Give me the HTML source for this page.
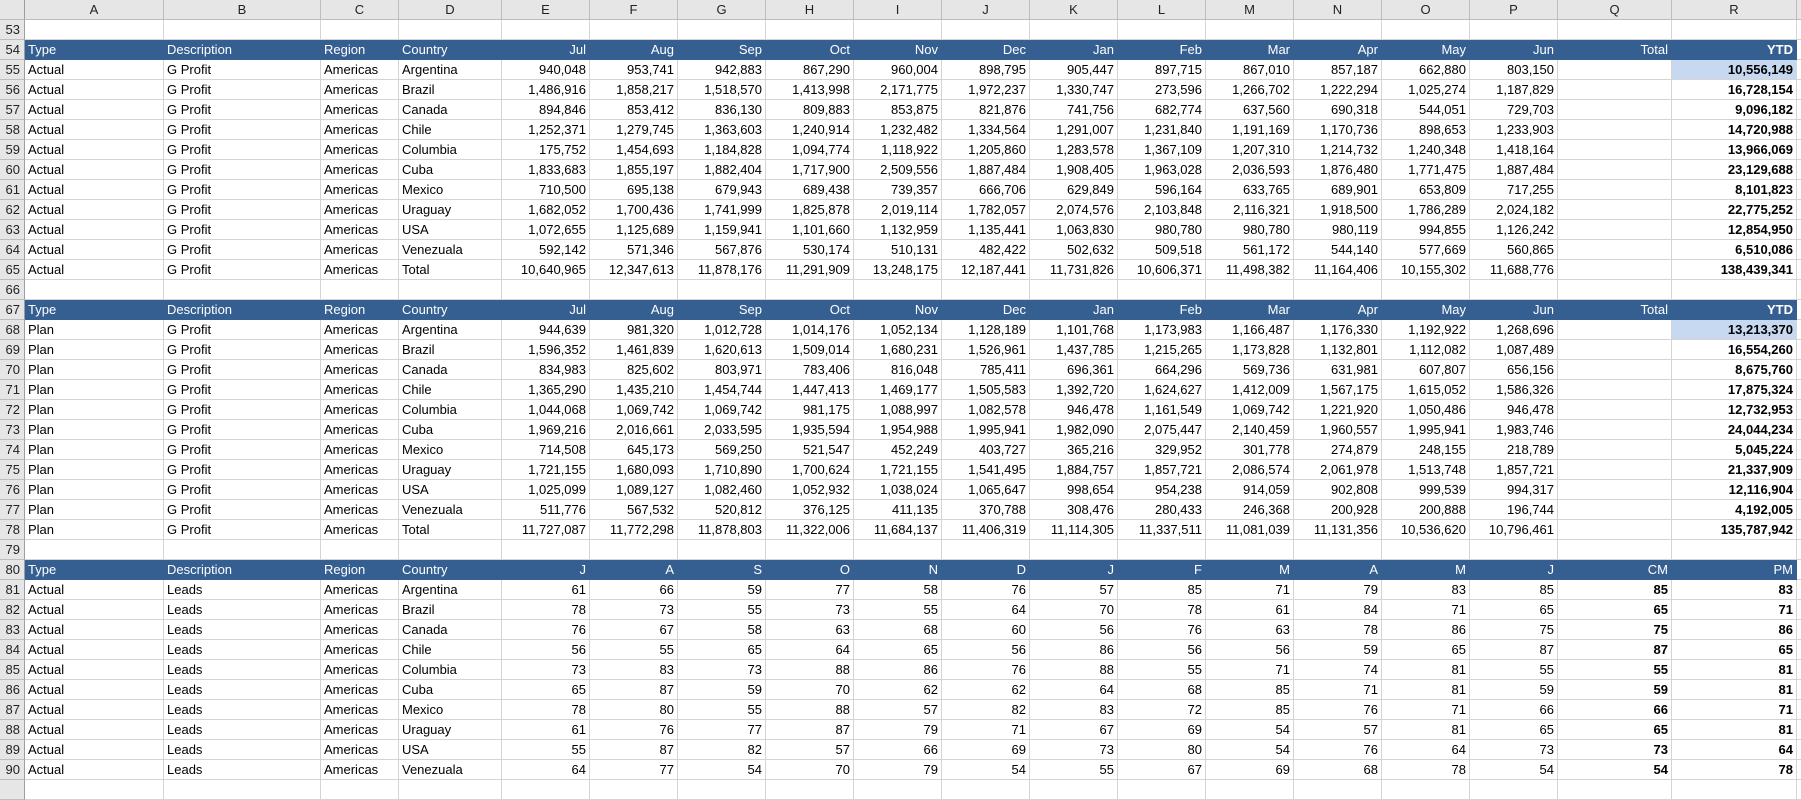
<!DOCTYPE html>
<html><head><meta charset="utf-8"><style>
body{margin:0;background:#fff;width:1801px;height:785px;overflow:hidden;font-family:"Liberation Sans",Arial,sans-serif;font-size:13px;color:#000}
.g{display:grid;grid-template-columns:25px 139px 157px 78px 103px repeat(12,88px) 114px 125px 4px;grid-auto-rows:20px}
.g>div{box-sizing:border-box;border-right:1px solid #d4d4d4;border-bottom:1px solid #d4d4d4;line-height:19px;padding:0 3px;white-space:nowrap;overflow:hidden}
.g>.h{background:#e6e6e6;text-align:center;border-color:#bdbdbd;color:#222;font-size:13px;line-height:20px}
.g>.n{background:#e6e6e6;text-align:right;border-right-color:#9e9e9e;border-bottom-color:#bdbdbd;color:#222;padding:0 4px 0 0}
.g>.c{background:#e6e6e6;border-color:#bdbdbd;border-right-color:#9e9e9e}
.r{text-align:right}
.b{font-weight:bold}
.g>.u{background:#365f91;color:#fff;border-color:#365f91}
.g>.s{background:#c6d9f1}
.g>.e{border-right:none}
</style></head><body><div class="g">
<div class="c"></div><div class="h">A</div><div class="h">B</div><div class="h">C</div><div class="h">D</div><div class="h">E</div><div class="h">F</div><div class="h">G</div><div class="h">H</div><div class="h">I</div><div class="h">J</div><div class="h">K</div><div class="h">L</div><div class="h">M</div><div class="h">N</div><div class="h">O</div><div class="h">P</div><div class="h">Q</div><div class="h">R</div><div class="h e"></div>
<div class="n">53</div><div></div><div></div><div></div><div></div><div></div><div></div><div></div><div></div><div></div><div></div><div></div><div></div><div></div><div></div><div></div><div></div><div></div><div></div><div class="e"></div>
<div class="n">54</div><div class="u">Type</div><div class="u">Description</div><div class="u">Region</div><div class="u">Country</div><div class="u r">Jul</div><div class="u r">Aug</div><div class="u r">Sep</div><div class="u r">Oct</div><div class="u r">Nov</div><div class="u r">Dec</div><div class="u r">Jan</div><div class="u r">Feb</div><div class="u r">Mar</div><div class="u r">Apr</div><div class="u r">May</div><div class="u r">Jun</div><div class="u r">Total</div><div class="u r b">YTD</div><div class="e"></div>
<div class="n">55</div><div>Actual</div><div>G Profit</div><div>Americas</div><div>Argentina</div><div class="r">940,048</div><div class="r">953,741</div><div class="r">942,883</div><div class="r">867,290</div><div class="r">960,004</div><div class="r">898,795</div><div class="r">905,447</div><div class="r">897,715</div><div class="r">867,010</div><div class="r">857,187</div><div class="r">662,880</div><div class="r">803,150</div><div></div><div class="r b s">10,556,149</div><div class="e"></div>
<div class="n">56</div><div>Actual</div><div>G Profit</div><div>Americas</div><div>Brazil</div><div class="r">1,486,916</div><div class="r">1,858,217</div><div class="r">1,518,570</div><div class="r">1,413,998</div><div class="r">2,171,775</div><div class="r">1,972,237</div><div class="r">1,330,747</div><div class="r">273,596</div><div class="r">1,266,702</div><div class="r">1,222,294</div><div class="r">1,025,274</div><div class="r">1,187,829</div><div></div><div class="r b">16,728,154</div><div class="e"></div>
<div class="n">57</div><div>Actual</div><div>G Profit</div><div>Americas</div><div>Canada</div><div class="r">894,846</div><div class="r">853,412</div><div class="r">836,130</div><div class="r">809,883</div><div class="r">853,875</div><div class="r">821,876</div><div class="r">741,756</div><div class="r">682,774</div><div class="r">637,560</div><div class="r">690,318</div><div class="r">544,051</div><div class="r">729,703</div><div></div><div class="r b">9,096,182</div><div class="e"></div>
<div class="n">58</div><div>Actual</div><div>G Profit</div><div>Americas</div><div>Chile</div><div class="r">1,252,371</div><div class="r">1,279,745</div><div class="r">1,363,603</div><div class="r">1,240,914</div><div class="r">1,232,482</div><div class="r">1,334,564</div><div class="r">1,291,007</div><div class="r">1,231,840</div><div class="r">1,191,169</div><div class="r">1,170,736</div><div class="r">898,653</div><div class="r">1,233,903</div><div></div><div class="r b">14,720,988</div><div class="e"></div>
<div class="n">59</div><div>Actual</div><div>G Profit</div><div>Americas</div><div>Columbia</div><div class="r">175,752</div><div class="r">1,454,693</div><div class="r">1,184,828</div><div class="r">1,094,774</div><div class="r">1,118,922</div><div class="r">1,205,860</div><div class="r">1,283,578</div><div class="r">1,367,109</div><div class="r">1,207,310</div><div class="r">1,214,732</div><div class="r">1,240,348</div><div class="r">1,418,164</div><div></div><div class="r b">13,966,069</div><div class="e"></div>
<div class="n">60</div><div>Actual</div><div>G Profit</div><div>Americas</div><div>Cuba</div><div class="r">1,833,683</div><div class="r">1,855,197</div><div class="r">1,882,404</div><div class="r">1,717,900</div><div class="r">2,509,556</div><div class="r">1,887,484</div><div class="r">1,908,405</div><div class="r">1,963,028</div><div class="r">2,036,593</div><div class="r">1,876,480</div><div class="r">1,771,475</div><div class="r">1,887,484</div><div></div><div class="r b">23,129,688</div><div class="e"></div>
<div class="n">61</div><div>Actual</div><div>G Profit</div><div>Americas</div><div>Mexico</div><div class="r">710,500</div><div class="r">695,138</div><div class="r">679,943</div><div class="r">689,438</div><div class="r">739,357</div><div class="r">666,706</div><div class="r">629,849</div><div class="r">596,164</div><div class="r">633,765</div><div class="r">689,901</div><div class="r">653,809</div><div class="r">717,255</div><div></div><div class="r b">8,101,823</div><div class="e"></div>
<div class="n">62</div><div>Actual</div><div>G Profit</div><div>Americas</div><div>Uraguay</div><div class="r">1,682,052</div><div class="r">1,700,436</div><div class="r">1,741,999</div><div class="r">1,825,878</div><div class="r">2,019,114</div><div class="r">1,782,057</div><div class="r">2,074,576</div><div class="r">2,103,848</div><div class="r">2,116,321</div><div class="r">1,918,500</div><div class="r">1,786,289</div><div class="r">2,024,182</div><div></div><div class="r b">22,775,252</div><div class="e"></div>
<div class="n">63</div><div>Actual</div><div>G Profit</div><div>Americas</div><div>USA</div><div class="r">1,072,655</div><div class="r">1,125,689</div><div class="r">1,159,941</div><div class="r">1,101,660</div><div class="r">1,132,959</div><div class="r">1,135,441</div><div class="r">1,063,830</div><div class="r">980,780</div><div class="r">980,780</div><div class="r">980,119</div><div class="r">994,855</div><div class="r">1,126,242</div><div></div><div class="r b">12,854,950</div><div class="e"></div>
<div class="n">64</div><div>Actual</div><div>G Profit</div><div>Americas</div><div>Venezuala</div><div class="r">592,142</div><div class="r">571,346</div><div class="r">567,876</div><div class="r">530,174</div><div class="r">510,131</div><div class="r">482,422</div><div class="r">502,632</div><div class="r">509,518</div><div class="r">561,172</div><div class="r">544,140</div><div class="r">577,669</div><div class="r">560,865</div><div></div><div class="r b">6,510,086</div><div class="e"></div>
<div class="n">65</div><div>Actual</div><div>G Profit</div><div>Americas</div><div>Total</div><div class="r">10,640,965</div><div class="r">12,347,613</div><div class="r">11,878,176</div><div class="r">11,291,909</div><div class="r">13,248,175</div><div class="r">12,187,441</div><div class="r">11,731,826</div><div class="r">10,606,371</div><div class="r">11,498,382</div><div class="r">11,164,406</div><div class="r">10,155,302</div><div class="r">11,688,776</div><div></div><div class="r b">138,439,341</div><div class="e"></div>
<div class="n">66</div><div></div><div></div><div></div><div></div><div></div><div></div><div></div><div></div><div></div><div></div><div></div><div></div><div></div><div></div><div></div><div></div><div></div><div></div><div class="e"></div>
<div class="n">67</div><div class="u">Type</div><div class="u">Description</div><div class="u">Region</div><div class="u">Country</div><div class="u r">Jul</div><div class="u r">Aug</div><div class="u r">Sep</div><div class="u r">Oct</div><div class="u r">Nov</div><div class="u r">Dec</div><div class="u r">Jan</div><div class="u r">Feb</div><div class="u r">Mar</div><div class="u r">Apr</div><div class="u r">May</div><div class="u r">Jun</div><div class="u r">Total</div><div class="u r b">YTD</div><div class="e"></div>
<div class="n">68</div><div>Plan</div><div>G Profit</div><div>Americas</div><div>Argentina</div><div class="r">944,639</div><div class="r">981,320</div><div class="r">1,012,728</div><div class="r">1,014,176</div><div class="r">1,052,134</div><div class="r">1,128,189</div><div class="r">1,101,768</div><div class="r">1,173,983</div><div class="r">1,166,487</div><div class="r">1,176,330</div><div class="r">1,192,922</div><div class="r">1,268,696</div><div></div><div class="r b s">13,213,370</div><div class="e"></div>
<div class="n">69</div><div>Plan</div><div>G Profit</div><div>Americas</div><div>Brazil</div><div class="r">1,596,352</div><div class="r">1,461,839</div><div class="r">1,620,613</div><div class="r">1,509,014</div><div class="r">1,680,231</div><div class="r">1,526,961</div><div class="r">1,437,785</div><div class="r">1,215,265</div><div class="r">1,173,828</div><div class="r">1,132,801</div><div class="r">1,112,082</div><div class="r">1,087,489</div><div></div><div class="r b">16,554,260</div><div class="e"></div>
<div class="n">70</div><div>Plan</div><div>G Profit</div><div>Americas</div><div>Canada</div><div class="r">834,983</div><div class="r">825,602</div><div class="r">803,971</div><div class="r">783,406</div><div class="r">816,048</div><div class="r">785,411</div><div class="r">696,361</div><div class="r">664,296</div><div class="r">569,736</div><div class="r">631,981</div><div class="r">607,807</div><div class="r">656,156</div><div></div><div class="r b">8,675,760</div><div class="e"></div>
<div class="n">71</div><div>Plan</div><div>G Profit</div><div>Americas</div><div>Chile</div><div class="r">1,365,290</div><div class="r">1,435,210</div><div class="r">1,454,744</div><div class="r">1,447,413</div><div class="r">1,469,177</div><div class="r">1,505,583</div><div class="r">1,392,720</div><div class="r">1,624,627</div><div class="r">1,412,009</div><div class="r">1,567,175</div><div class="r">1,615,052</div><div class="r">1,586,326</div><div></div><div class="r b">17,875,324</div><div class="e"></div>
<div class="n">72</div><div>Plan</div><div>G Profit</div><div>Americas</div><div>Columbia</div><div class="r">1,044,068</div><div class="r">1,069,742</div><div class="r">1,069,742</div><div class="r">981,175</div><div class="r">1,088,997</div><div class="r">1,082,578</div><div class="r">946,478</div><div class="r">1,161,549</div><div class="r">1,069,742</div><div class="r">1,221,920</div><div class="r">1,050,486</div><div class="r">946,478</div><div></div><div class="r b">12,732,953</div><div class="e"></div>
<div class="n">73</div><div>Plan</div><div>G Profit</div><div>Americas</div><div>Cuba</div><div class="r">1,969,216</div><div class="r">2,016,661</div><div class="r">2,033,595</div><div class="r">1,935,594</div><div class="r">1,954,988</div><div class="r">1,995,941</div><div class="r">1,982,090</div><div class="r">2,075,447</div><div class="r">2,140,459</div><div class="r">1,960,557</div><div class="r">1,995,941</div><div class="r">1,983,746</div><div></div><div class="r b">24,044,234</div><div class="e"></div>
<div class="n">74</div><div>Plan</div><div>G Profit</div><div>Americas</div><div>Mexico</div><div class="r">714,508</div><div class="r">645,173</div><div class="r">569,250</div><div class="r">521,547</div><div class="r">452,249</div><div class="r">403,727</div><div class="r">365,216</div><div class="r">329,952</div><div class="r">301,778</div><div class="r">274,879</div><div class="r">248,155</div><div class="r">218,789</div><div></div><div class="r b">5,045,224</div><div class="e"></div>
<div class="n">75</div><div>Plan</div><div>G Profit</div><div>Americas</div><div>Uraguay</div><div class="r">1,721,155</div><div class="r">1,680,093</div><div class="r">1,710,890</div><div class="r">1,700,624</div><div class="r">1,721,155</div><div class="r">1,541,495</div><div class="r">1,884,757</div><div class="r">1,857,721</div><div class="r">2,086,574</div><div class="r">2,061,978</div><div class="r">1,513,748</div><div class="r">1,857,721</div><div></div><div class="r b">21,337,909</div><div class="e"></div>
<div class="n">76</div><div>Plan</div><div>G Profit</div><div>Americas</div><div>USA</div><div class="r">1,025,099</div><div class="r">1,089,127</div><div class="r">1,082,460</div><div class="r">1,052,932</div><div class="r">1,038,024</div><div class="r">1,065,647</div><div class="r">998,654</div><div class="r">954,238</div><div class="r">914,059</div><div class="r">902,808</div><div class="r">999,539</div><div class="r">994,317</div><div></div><div class="r b">12,116,904</div><div class="e"></div>
<div class="n">77</div><div>Plan</div><div>G Profit</div><div>Americas</div><div>Venezuala</div><div class="r">511,776</div><div class="r">567,532</div><div class="r">520,812</div><div class="r">376,125</div><div class="r">411,135</div><div class="r">370,788</div><div class="r">308,476</div><div class="r">280,433</div><div class="r">246,368</div><div class="r">200,928</div><div class="r">200,888</div><div class="r">196,744</div><div></div><div class="r b">4,192,005</div><div class="e"></div>
<div class="n">78</div><div>Plan</div><div>G Profit</div><div>Americas</div><div>Total</div><div class="r">11,727,087</div><div class="r">11,772,298</div><div class="r">11,878,803</div><div class="r">11,322,006</div><div class="r">11,684,137</div><div class="r">11,406,319</div><div class="r">11,114,305</div><div class="r">11,337,511</div><div class="r">11,081,039</div><div class="r">11,131,356</div><div class="r">10,536,620</div><div class="r">10,796,461</div><div></div><div class="r b">135,787,942</div><div class="e"></div>
<div class="n">79</div><div></div><div></div><div></div><div></div><div></div><div></div><div></div><div></div><div></div><div></div><div></div><div></div><div></div><div></div><div></div><div></div><div></div><div></div><div class="e"></div>
<div class="n">80</div><div class="u">Type</div><div class="u">Description</div><div class="u">Region</div><div class="u">Country</div><div class="u r">J</div><div class="u r">A</div><div class="u r">S</div><div class="u r">O</div><div class="u r">N</div><div class="u r">D</div><div class="u r">J</div><div class="u r">F</div><div class="u r">M</div><div class="u r">A</div><div class="u r">M</div><div class="u r">J</div><div class="u r">CM</div><div class="u r">PM</div><div class="e"></div>
<div class="n">81</div><div>Actual</div><div>Leads</div><div>Americas</div><div>Argentina</div><div class="r">61</div><div class="r">66</div><div class="r">59</div><div class="r">77</div><div class="r">58</div><div class="r">76</div><div class="r">57</div><div class="r">85</div><div class="r">71</div><div class="r">79</div><div class="r">83</div><div class="r">85</div><div class="r b">85</div><div class="r b">83</div><div class="e"></div>
<div class="n">82</div><div>Actual</div><div>Leads</div><div>Americas</div><div>Brazil</div><div class="r">78</div><div class="r">73</div><div class="r">55</div><div class="r">73</div><div class="r">55</div><div class="r">64</div><div class="r">70</div><div class="r">78</div><div class="r">61</div><div class="r">84</div><div class="r">71</div><div class="r">65</div><div class="r b">65</div><div class="r b">71</div><div class="e"></div>
<div class="n">83</div><div>Actual</div><div>Leads</div><div>Americas</div><div>Canada</div><div class="r">76</div><div class="r">67</div><div class="r">58</div><div class="r">63</div><div class="r">68</div><div class="r">60</div><div class="r">56</div><div class="r">76</div><div class="r">63</div><div class="r">78</div><div class="r">86</div><div class="r">75</div><div class="r b">75</div><div class="r b">86</div><div class="e"></div>
<div class="n">84</div><div>Actual</div><div>Leads</div><div>Americas</div><div>Chile</div><div class="r">56</div><div class="r">55</div><div class="r">65</div><div class="r">64</div><div class="r">65</div><div class="r">56</div><div class="r">86</div><div class="r">56</div><div class="r">56</div><div class="r">59</div><div class="r">65</div><div class="r">87</div><div class="r b">87</div><div class="r b">65</div><div class="e"></div>
<div class="n">85</div><div>Actual</div><div>Leads</div><div>Americas</div><div>Columbia</div><div class="r">73</div><div class="r">83</div><div class="r">73</div><div class="r">88</div><div class="r">86</div><div class="r">76</div><div class="r">88</div><div class="r">55</div><div class="r">71</div><div class="r">74</div><div class="r">81</div><div class="r">55</div><div class="r b">55</div><div class="r b">81</div><div class="e"></div>
<div class="n">86</div><div>Actual</div><div>Leads</div><div>Americas</div><div>Cuba</div><div class="r">65</div><div class="r">87</div><div class="r">59</div><div class="r">70</div><div class="r">62</div><div class="r">62</div><div class="r">64</div><div class="r">68</div><div class="r">85</div><div class="r">71</div><div class="r">81</div><div class="r">59</div><div class="r b">59</div><div class="r b">81</div><div class="e"></div>
<div class="n">87</div><div>Actual</div><div>Leads</div><div>Americas</div><div>Mexico</div><div class="r">78</div><div class="r">80</div><div class="r">55</div><div class="r">88</div><div class="r">57</div><div class="r">82</div><div class="r">83</div><div class="r">72</div><div class="r">85</div><div class="r">76</div><div class="r">71</div><div class="r">66</div><div class="r b">66</div><div class="r b">71</div><div class="e"></div>
<div class="n">88</div><div>Actual</div><div>Leads</div><div>Americas</div><div>Uraguay</div><div class="r">61</div><div class="r">76</div><div class="r">77</div><div class="r">87</div><div class="r">79</div><div class="r">71</div><div class="r">67</div><div class="r">69</div><div class="r">54</div><div class="r">57</div><div class="r">81</div><div class="r">65</div><div class="r b">65</div><div class="r b">81</div><div class="e"></div>
<div class="n">89</div><div>Actual</div><div>Leads</div><div>Americas</div><div>USA</div><div class="r">55</div><div class="r">87</div><div class="r">82</div><div class="r">57</div><div class="r">66</div><div class="r">69</div><div class="r">73</div><div class="r">80</div><div class="r">54</div><div class="r">76</div><div class="r">64</div><div class="r">73</div><div class="r b">73</div><div class="r b">64</div><div class="e"></div>
<div class="n">90</div><div>Actual</div><div>Leads</div><div>Americas</div><div>Venezuala</div><div class="r">64</div><div class="r">77</div><div class="r">54</div><div class="r">70</div><div class="r">79</div><div class="r">54</div><div class="r">55</div><div class="r">67</div><div class="r">69</div><div class="r">68</div><div class="r">78</div><div class="r">54</div><div class="r b">54</div><div class="r b">78</div><div class="e"></div>
<div class="n"></div><div></div><div></div><div></div><div></div><div></div><div></div><div></div><div></div><div></div><div></div><div></div><div></div><div></div><div></div><div></div><div></div><div></div><div></div><div class="e"></div>
</div></body></html>
